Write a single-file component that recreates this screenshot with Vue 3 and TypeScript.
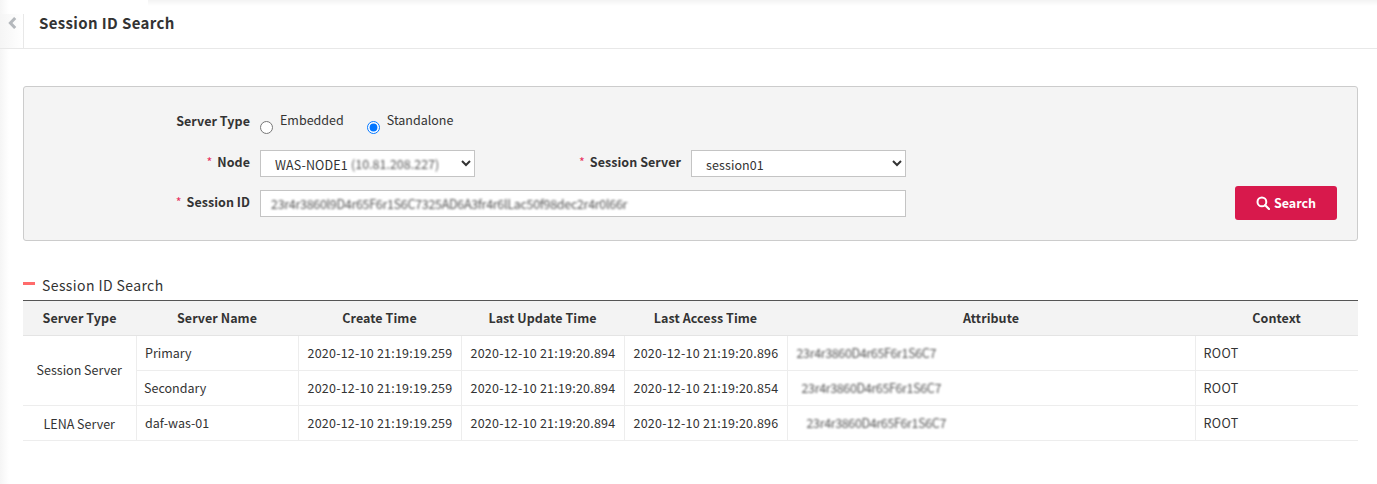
<script setup lang="ts">
interface Row { type?: string; span?: number; name: string; nameClass: string; create: string; update: string; access: string; attrClass: string; }
const headers = ['Server Type', 'Server Name', 'Create Time', 'Last Update Time', 'Last Access Time', 'Attribute', 'Context'];
const attr = '23r4r3860D4r65F6r1S6C7';
const rows: Row[] = [
  { type: 'Session Server', span: 2, name: 'Primary', nameClass: '', create: '2020-12-10 21:19:19.259', update: '2020-12-10 21:19:20.894', access: '2020-12-10 21:19:20.896', attrClass: 'a0' },
  { name: 'Secondary', nameClass: 'shift', create: '2020-12-10 21:19:19.259', update: '2020-12-10 21:19:20.894', access: '2020-12-10 21:19:20.854', attrClass: 'a1' },
  { type: 'LENA Server', span: 1, name: 'daf-was-01', nameClass: '', create: '2020-12-10 21:19:19.259', update: '2020-12-10 21:19:20.894', access: '2020-12-10 21:19:20.896', attrClass: 'a2' },
];
</script>

<template>
  <div class="page">
    <div class="top-shadow"></div>
    <header class="head">
      <div class="back">
        <svg width="9" height="12" viewBox="0 0 9 12"><path d="M7.2 1 L2.4 6 L7.2 11" fill="none" stroke="#b4b8bc" stroke-width="3" /></svg>
      </div>
      <h1>Session ID Search</h1>
    </header>

    <main class="content">
      <section class="panel">
        <div class="form">
          <label class="lbl first-lbl">Server Type</label>
          <div class="radios">
            <label class="radio"><input type="radio" name="st" /><span>Embedded</span></label>
            <label class="radio"><input type="radio" name="st" checked /><span>Standalone</span></label>
          </div>
          <label class="lbl"><i>*</i> Node</label>
          <div class="ctl">
            <select class="sel"><option>WAS-NODE1</option></select>
            <span class="blur ip">(10.81.208.227)</span>
          </div>
          <label class="lbl mid"><i>*</i> Session Server</label>
          <div class="ctl"><select class="sel"><option>session01</option></select></div>
          <label class="lbl"><i>*</i> Session ID</label>
          <div class="ctl wide"><div class="inp"><span class="blur sid">23r4r3860l9D4r65F6r1S6C7325AD6A3fr4r6lLac50f98dec2r4r0l66r</span></div></div>
        </div>
        <button class="btn" type="button">
          <svg width="14" height="14" viewBox="0 0 14 14"><circle cx="5.9" cy="5.9" r="4.4" fill="none" stroke="#fff" stroke-width="2" /><path d="M9.2 9.2 L13 13" stroke="#fff" stroke-width="2.2" stroke-linecap="round" /></svg>
          <span class="btn-text">Search</span>
        </button>
      </section>

      <h2 class="sub"><span class="dash"></span>Session ID Search</h2>
      <table class="tbl">
        <colgroup>
          <col style="width:113px" /><col style="width:162px" /><col style="width:163px" /><col style="width:163px" /><col style="width:163px" /><col style="width:408px" /><col style="width:163px" />
        </colgroup>
        <thead>
          <tr><th v-for="h in headers" :key="h">{{ h }}</th></tr>
        </thead>
        <tbody>
          <tr v-for="r in rows" :key="r.name + r.access">
            <td v-if="r.type" :rowspan="r.span" class="center first" :class="{ merged: r.span === 2 }">{{ r.type }}</td>
            <td class="name"><span :class="r.nameClass">{{ r.name }}</span></td>
            <td class="time">{{ r.create }}</td>
            <td class="time">{{ r.update }}</td>
            <td class="time">{{ r.access }}</td>
            <td><span class="blur attr" :class="r.attrClass">{{ attr }}</span></td>
            <td class="root">ROOT</td>
          </tr>
        </tbody>
      </table>
    </main>
  </div>
</template>

<style>
html, body { margin: 0; background: #fff; }
</style>

<style scoped>
.page {
  position: relative;
  width: 1377px;
  height: 484px;
  overflow: hidden;
  background: linear-gradient(to right, #f5f5f5, #fff 9px);
  font-family: "Noto Sans CJK KR", "Noto Sans", sans-serif;
  font-size: 12.5px;
  color: #333;
}
.top-shadow {
  position: absolute;
  left: 148px; right: 0; top: 0;
  height: 6px;
  background: linear-gradient(to bottom, #f3f3f3, #fff);
}
.head {
  box-sizing: border-box;
  height: 49px;
  padding-top: 14px;
  display: flex;
  align-items: stretch;
  border-bottom: 1px solid #e8e8e8;
}
.back {
  box-sizing: border-box;
  width: 24px;
  display: flex;
  justify-content: center;
  padding-top: 3px;
  padding-left: 1px;
  align-items: flex-start;
  border-right: 1px solid #e8e8e8;
  background: linear-gradient(to right, #f5f5f5, #fff);
}
h1 {
  margin: 0 0 0 15px;
  font-size: 15px;
  line-height: 20px;
  font-weight: 700;
  letter-spacing: 0.36px;
  color: #333;
  position: relative;
  top: -1px;
}
.content { padding: 37px 19px 0 23px; }
.panel {
  box-sizing: border-box;
  height: 155px;
  background: #f4f4f4;
  border: 1px solid #ccc;
  border-radius: 3px;
  padding: 23px 20px 20px 0;
  display: flex;
  justify-content: space-between;
  align-items: flex-end;
}
.form {
  align-self: flex-start;
  display: grid;
  grid-template-columns: 226px 215px 196px 215px;
  column-gap: 10px;
  row-gap: 13px;
  grid-auto-rows: 27px;
}
.lbl {
  text-align: right;
  font-weight: 700;
  line-height: 24px;
  letter-spacing: 0.05px;
  color: #333;
}
.first-lbl { line-height: 22px; }
.lbl i { font-style: normal; font-weight: 400; color: #e8315f; margin-right: 2px; }
.radios { grid-column: 2 / 5; display: flex; gap: 23px; }
.radio { display: flex; align-items: flex-start; }
.radio input { width: 13px; height: 13px; margin: 11px 7px 0 0; }
.radio span { line-height: 20px; }
.ctl { position: relative; }
.sel {
  width: 100%;
  height: 27px;
  box-sizing: border-box;
  border: 1px solid #c4c4c4;
  background-color: #fff;
  padding: 2px 0 0 10px;
  font: inherit;
  letter-spacing: 0.1px;
  color: #333;
  border-radius: 0;
}
.ip {
  position: absolute;
  left: 91px;
  top: 4px;
  line-height: 20px;
  pointer-events: none;
}
.wide { grid-column: 2 / 5; }
.inp {
  box-sizing: border-box;
  height: 27px;
  border: 1px solid #c4c4c4;
  background: #fff;
  padding-left: 10px;
  line-height: 25px;
  white-space: nowrap;
  overflow: hidden;
}
.blur { filter: blur(1.2px); display: inline-block; color: #555; }
.sid { letter-spacing: -0.3px; }
.btn {
  box-sizing: border-box;
  width: 102px;
  height: 34px;
  border: 0;
  border-radius: 3px;
  background: #d8194c;
  color: #fff;
  font: inherit;
  font-weight: 700;
  display: flex;
  align-items: center;
  justify-content: center;
  gap: 4px;
}
.btn-text { position: relative; top: -1px; }
.sub {
  margin: 31px 0 0;
  height: 28px;
  padding-bottom: 3px;
  box-sizing: border-box;
  font-size: 14px;
  font-weight: 400;
  line-height: 24px;
  letter-spacing: 0.4px;
  display: flex;
  align-items: center;
  color: #333;
}
.dash { width: 12px; height: 3px; background: #ff6b6b; margin-right: 7px; position: relative; top: -1px; }
.tbl {
  width: 1335px;
  table-layout: fixed;
  border-collapse: collapse;
  border-top: 1px solid #555;
}
th {
  height: 35px;
  padding: 0 0 2px;
  box-sizing: border-box;
  background: #f3f3f3;
  font-weight: 700;
  text-align: center;
  letter-spacing: 0.06px;
  border-bottom: 1px solid #e4e4e4;
}
td {
  padding: 0 0 1px 8px;
  box-sizing: border-box;
  height: 35px;
  border-bottom: 1px solid #ededed;
  border-left: 1px solid #ededed;
  white-space: nowrap;
  overflow: hidden;
}
td.center { text-align: center; padding: 0; }
td.merged { padding-bottom: 3px; }
td.first { border-left: 0; }
td.name { padding-left: 8.5px; }
td.time { padding-left: 9px; letter-spacing: 0.22px; }
.root { letter-spacing: 0.35px; }
.shift { margin-left: -1px; }
.attr { margin-left: 1px; letter-spacing: -0.36px; }
.a1 { margin-left: 6px; }
.a2 { margin-left: 11px; }
</style>
